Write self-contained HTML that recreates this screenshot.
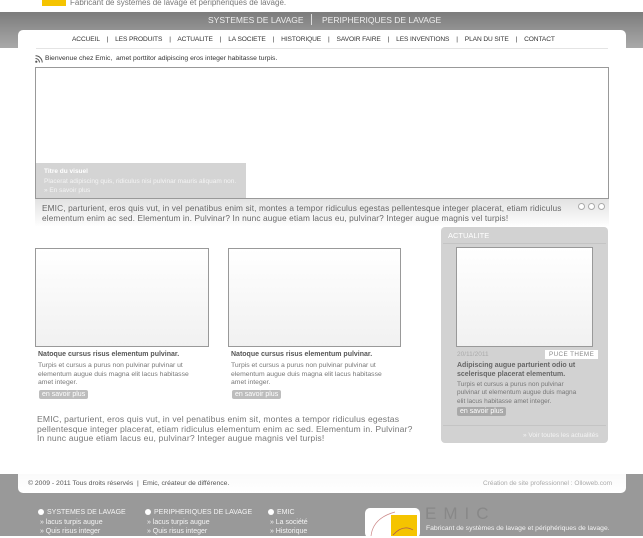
<!DOCTYPE html>
<html><head><meta charset="utf-8"><style>
*{margin:0;padding:0;box-sizing:border-box}
body{width:643px;height:536px;overflow:hidden;background:#fff;font-family:"Liberation Sans",sans-serif;position:relative;color:#666}
.a{position:absolute;white-space:nowrap}
.band{position:absolute;left:0;top:12px;width:643px;height:36px;background:linear-gradient(#7c7c7c,#a9a9a9)}
.panel{position:absolute;left:18px;top:30px;width:608px;height:445px;background:#fff;border-radius:5px 5px 0 0}
.box{position:absolute;border:1px solid #999;background:linear-gradient(#fff,#f1f1f1)}
.btn{position:absolute;background:#bdbdbd;color:#fff;font-size:7px;border-radius:2px;padding:1px 3px}
.foot{position:absolute;left:0;top:474px;width:643px;height:62px;background:#999}
.fcol{position:absolute;font-size:7px;color:#f4f4f4;line-height:9.5px}
.fcol b{font-weight:normal;display:inline-block;width:6px;height:6px;border-radius:50%;background:#fff;margin-right:3px;vertical-align:-1px}
</style></head><body>
<div class="a" style="left:42px;top:0;width:24px;height:6px;background:#f5c400"></div>
<div class="a" style="left:70px;top:-2px;font-size:8px;color:#777">Fabricant de systèmes de lavage et périphériques de lavage.</div>
<div class="band"></div>
<div class="a" style="left:208px;top:15px;font-size:8.5px;color:#eee">SYSTEMES DE LAVAGE</div>
<div class="a" style="left:311px;top:14px;width:1px;height:11px;background:#ddd"></div>
<div class="a" style="left:322px;top:15px;font-size:8.5px;color:#eee">PERIPHERIQUES DE LAVAGE</div>
<div class="panel"></div>
<div class="a" style="left:72px;top:36px;font-size:6.6px;color:#333;letter-spacing:-0.1px">ACCUEIL &nbsp;&nbsp;&nbsp;|&nbsp;&nbsp;&nbsp; LES PRODUITS &nbsp;&nbsp;&nbsp;|&nbsp;&nbsp;&nbsp; ACTUALITE &nbsp;&nbsp;&nbsp;|&nbsp;&nbsp;&nbsp; LA SOCIETE &nbsp;&nbsp;&nbsp;|&nbsp;&nbsp;&nbsp; HISTORIQUE &nbsp;&nbsp;&nbsp;|&nbsp;&nbsp;&nbsp; SAVOIR FAIRE &nbsp;&nbsp;&nbsp;|&nbsp;&nbsp;&nbsp; LES INVENTIONS &nbsp;&nbsp;&nbsp;|&nbsp;&nbsp;&nbsp; PLAN DU SITE &nbsp;&nbsp;&nbsp;|&nbsp;&nbsp;&nbsp; CONTACT</div>
<div class="a" style="left:36px;top:48px;width:572px;height:1px;background:#e4e4e4"></div>
<svg class="a" style="left:35px;top:55px" width="8" height="8" viewBox="0 0 8 8"><circle cx="1.3" cy="6.7" r="1.1" fill="#555"/><path d="M0.5 3.5a4 4 0 0 1 4 4M0.5 0.8a6.7 6.7 0 0 1 6.7 6.7" stroke="#555" fill="none" stroke-width="1"/></svg>
<div class="a" style="left:45px;top:55px;font-size:6.8px;color:#333">Bienvenue chez Emic, &nbsp;amet porttitor adipiscing eros integer habitasse turpis.</div>
<div class="a" style="left:35px;top:67px;width:574px;height:132px;border:1px solid #999;background:#fff"></div>
<div class="a" style="left:36px;top:163px;width:210px;height:35px;background:#d4d4d4"></div>
<div class="a" style="left:44px;top:168px;font-size:6.5px;color:#fff;font-weight:bold">Titre du visuel</div>
<div class="a" style="left:44px;top:178px;font-size:6.5px;color:#f4f4f4">Placerat adipiscing quis, ridiculus nisi pulvinar mauris aliquam non.</div>
<div class="a" style="left:44px;top:187px;font-size:6.5px;color:#f4f4f4">» En savoir plus</div>
<div class="a" style="left:35px;top:199px;width:574px;height:28px;background:linear-gradient(#e2e2e2,#fff)"></div>
<div class="a" style="left:42px;top:204px;font-size:8.3px;color:#666;line-height:9.5px;white-space:normal;width:534px;letter-spacing:0.12px">EMIC, parturient, eros quis vut, in vel penatibus enim sit, montes a tempor ridiculus egestas pellentesque integer placerat, etiam ridiculus elementum enim ac sed. Elementum in. Pulvinar? In nunc augue etiam lacus eu, pulvinar? Integer augue magnis vel turpis!</div>
<div class="a" style="left:578px;top:203px;width:7px;height:7px;border-radius:50%;border:1px solid #aaa;background:#fff"></div>
<div class="a" style="left:588px;top:203px;width:7px;height:7px;border-radius:50%;border:1px solid #aaa;background:#fff"></div>
<div class="a" style="left:598px;top:203px;width:7px;height:7px;border-radius:50%;border:1px solid #aaa;background:#fff"></div>

<div class="box" style="left:35px;top:248px;width:174px;height:99px"></div>
<div class="a" style="left:38px;top:351px;font-size:7px;font-weight:bold;color:#555">Natoque cursus risus elementum pulvinar.</div>
<div class="a" style="left:38px;top:362px;font-size:6.8px;line-height:8.5px;white-space:normal;width:165px;color:#777">Turpis et cursus a purus non pulvinar pulvinar ut elementum augue duis magna elit lacus habitasse amet integer.</div>
<div class="btn" style="left:39px;top:390px">en savoir plus</div>
<div class="box" style="left:228px;top:248px;width:173px;height:99px"></div>
<div class="a" style="left:231px;top:351px;font-size:7px;font-weight:bold;color:#555">Natoque cursus risus elementum pulvinar.</div>
<div class="a" style="left:231px;top:362px;font-size:6.8px;line-height:8.5px;white-space:normal;width:165px;color:#777">Turpis et cursus a purus non pulvinar pulvinar ut elementum augue duis magna elit lacus habitasse amet integer.</div>
<div class="btn" style="left:232px;top:390px">en savoir plus</div>
<div class="a" style="left:37px;top:415px;font-size:8.6px;line-height:9.6px;white-space:normal;width:378px;color:#777;letter-spacing:0.15px">EMIC, parturient, eros quis vut, in vel penatibus enim sit, montes a tempor ridiculus egestas pellentesque integer placerat, etiam ridiculus elementum enim ac sed. Elementum in. Pulvinar? In nunc augue etiam lacus eu, pulvinar? Integer augue magnis vel turpis!</div>

<div class="a" style="left:441px;top:227px;width:167px;height:216px;background:#d2d2d2;border-radius:4px"></div>
<div class="a" style="left:448px;top:231px;font-size:7.5px;color:#fff">ACTUALITE</div>
<div class="a" style="left:443px;top:243px;width:163px;height:1px;background:#c4c4c4"></div>
<div class="box" style="left:456px;top:247px;width:137px;height:100px"></div>
<div class="a" style="left:457px;top:351px;font-size:6.5px;color:#aaa">20/11/2011</div>
<div class="a" style="left:545px;top:350px;font-size:6.3px;color:#888;background:#fff;padding:1px 4px;letter-spacing:.4px">PUCE THEME</div>
<div class="a" style="left:457px;top:362px;font-size:7px;font-weight:bold;color:#666;line-height:8.5px;white-space:normal;width:130px">Adipiscing augue parturient odio ut scelerisque placerat elementum.</div>
<div class="a" style="left:457px;top:381px;font-size:6.5px;color:#777;line-height:8.3px;white-space:normal;width:128px">Turpis et cursus a purus non pulvinar pulvinar ut elementum augue duis magna elit lacus habitasse amet integer.</div>
<div class="btn" style="left:457px;top:407px;background:#a9a9a9">en savoir plus</div>
<div class="a" style="left:443px;top:425px;width:163px;height:1px;background:#c4c4c4"></div>
<div class="a" style="left:523px;top:432px;font-size:6.5px;color:#f4f4f4">» Voir toutes les actualités</div>

<div class="foot"></div>
<div class="a" style="left:18px;top:474px;width:608px;height:19px;background:linear-gradient(#fafafa,#fff);border-radius:0 0 5px 5px"></div>
<div class="a" style="left:28px;top:480px;font-size:6.8px;color:#555">© 2009 - 2011 Tous droits réservés &nbsp;| &nbsp;Emic, créateur de différence.</div>
<div class="a" style="left:483px;top:480px;font-size:6.5px;color:#aaa">Création de site professionnel : Olloweb.com</div>
<div class="fcol" style="left:38px;top:508px"><b></b>SYSTEMES DE LAVAGE<br>&nbsp;» lacus turpis augue<br>&nbsp;» Quis risus integer</div>
<div class="fcol" style="left:145px;top:508px"><b></b>PERIPHERIQUES DE LAVAGE<br>&nbsp;» lacus turpis augue<br>&nbsp;» Quis risus integer</div>
<div class="fcol" style="left:268px;top:508px"><b></b>EMIC<br>&nbsp;» La société<br>&nbsp;» Historique</div>
<div class="a" style="left:365px;top:508px;width:55px;height:30px;background:#fff;border-radius:5px"></div>
<div class="a" style="left:391px;top:515px;width:26px;height:21px;background:#f5c400"></div>
<svg class="a" style="left:365px;top:508px" width="55" height="28"><path d="M30 4 Q8 10 6 28" stroke="#c88" fill="none" stroke-width="0.7"/><path d="M28 27 Q38 16 48 22" stroke="#a55" fill="none" stroke-width="0.7"/></svg>
<div class="a" style="left:425px;top:504px;font-size:17px;color:#888;letter-spacing:7px">EMIC</div>
<div class="a" style="left:426px;top:525px;font-size:6.8px;color:#f4f4f4">Fabricant de systèmes de lavage et périphériques de lavage.</div>
</body></html>
